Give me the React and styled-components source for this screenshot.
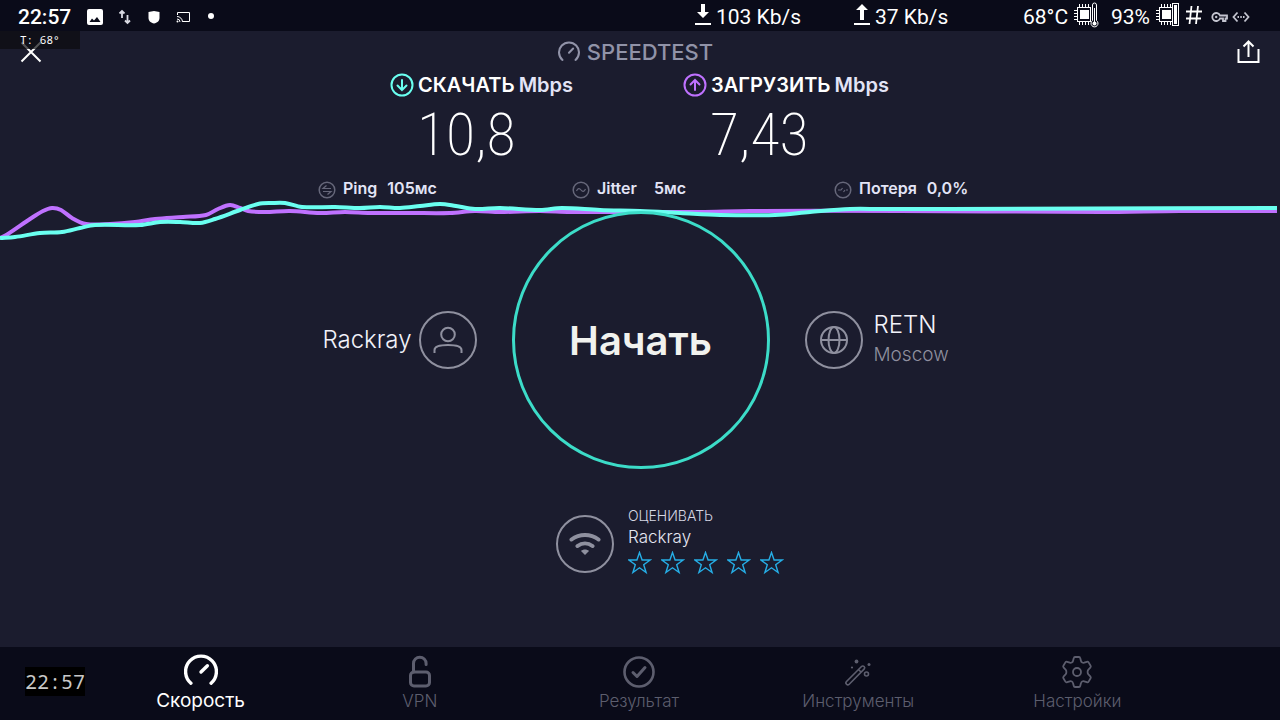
import React from "react";
import styled, { createGlobalStyle } from "styled-components";

const Global = createGlobalStyle`
  * { box-sizing: border-box; }
  body { margin: 0; background: #1b1c2e; }
  button { font: inherit; color: inherit; background: none; border: 0; padding: 0; cursor: pointer; }
  svg { display: block; flex: none; }
`;

const Page = styled.div`
  min-height: 100vh;
  display: flex;
  flex-direction: column;
  background: #1b1c2e;
  color: #fff;
  font-family: Inter, "Noto Sans", sans-serif;
`;

/* system status bar */
const StatusBar = styled.div`
  display: flex;
  align-items: center;
  justify-content: space-between;
  height: 31px;
  padding: 2px 30px 0 18px;
  background: #0a0b19;
  font-family: Roboto, sans-serif;
  font-size: 21px;
  line-height: 28px;
`;
const StatusGroup = styled.div`
  display: flex;
  align-items: center;
  gap: ${(p) => p.$gap || 0}px;
`;
const Clock = styled.time`
  font-weight: 500;
  width: 54px;
`;
const Stat = styled.div`
  display: flex;
  align-items: center;
  gap: ${(p) => p.$gap || 2}px;
  width: ${(p) => p.$w}px;
  white-space: nowrap;
`;
const Raised = styled.span`
  display: flex;
  padding-bottom: 4px;
`;

const Main = styled.main`
  flex: 1;
  display: flex;
  flex-direction: column;
`;
const Header = styled.header`
  position: relative;
  display: grid;
  grid-template-columns: 1fr auto 1fr;
  align-items: center;
  height: 42px;
  padding: 0 20px;
`;
const IconButton = styled.button`
  justify-self: ${(p) => p.$side};
  display: flex;
`;
const TempOverlay = styled.div`
  position: absolute;
  left: 0;
  top: 0;
  width: 80px;
  height: 18px;
  padding-left: 20px;
  background: rgba(12, 12, 16, 0.7);
  font: 11px/18px "Noto Sans Mono", "DejaVu Sans Mono", monospace;
  white-space: pre;
`;
const Brand = styled.h1`
  display: flex;
  align-items: center;
  gap: 7px;
  margin: 0 9px 0 0;
  color: #9193a8;
  font-size: 22px;
  font-weight: 500;
  line-height: 24px;
`;

const Speeds = styled.section`
  display: grid;
  grid-template-columns: 293px 207px;
  justify-content: center;
`;
const SpeedLabel = styled.h2`
  display: flex;
  align-items: center;
  gap: 4px;
  margin: 0;
  font-size: 20px;
  font-weight: 600;
  line-height: 24px;
  white-space: nowrap;
`;
const Unit = styled.span`
  color: #e3e4f6;
`;
const SpeedValue = styled.div`
  padding-left: 27px;
  font-family: "Noto Sans ExtraCondensed", "Roboto Condensed", "Open Sans Condensed", Roboto, sans-serif;
  font-size: 60px;
  font-weight: 200;
  line-height: 76px;
`;

const Quality = styled.section`
  display: grid;
  grid-template-columns: 254px 262px 136px;
  justify-content: center;
  padding: 4px 0 0 8px;
`;
const QualityItem = styled.div`
  display: flex;
  align-items: center;
  gap: 7px;
  color: #e3e4f6;
  font-size: 16px;
  font-weight: 600;
  line-height: 20px;
  white-space: nowrap;
`;
const QualityValue = styled.span`
  margin-left: ${(p) => (p.$wide ? 10 : 3)}px;
`;
const Sunk = styled.span`
  padding-top: 4px;
`;

const Stage = styled.section`
  position: relative;
  display: grid;
  grid-template-columns: 1fr 258px 1fr;
  align-items: center;
  gap: 35px;
  padding: 12px 0 0 1px;
`;
const Chart = styled.svg`
  position: absolute;
  left: 0;
  top: 0;
  width: 100%;
  height: 42px;
`;
const StartButton = styled.button`
  position: relative;
  height: 258px;
  && {
    border: 3px solid #3cdcc8;
    border-radius: 50%;
    color: #f1f2ee;
    font-size: 40px;
    font-weight: 600;
  }
`;
const Party = styled.div`
  display: flex;
  align-items: center;
  justify-content: ${(p) => p.$side};
  gap: ${(p) => (p.$side === "flex-end" ? 7 : 11)}px;
`;
const Ring = styled.div`
  display: flex;
  align-items: center;
  justify-content: center;
  flex: none;
  width: 58px;
  height: 58px;
  border: 2px solid #8f909f;
  border-radius: 50%;
  color: #8f909f;
`;
const PartyName = styled.div`
  color: #f2f2fa;
  font-size: 24px;
  font-weight: 300;
  line-height: 30px;
`;
const PartyPlace = styled.div`
  color: #8f909f;
  font-size: 19px;
  font-weight: 300;
  line-height: 30px;
`;

const Rate = styled.section`
  display: flex;
  align-items: center;
  justify-content: center;
  gap: 14px;
  padding: 38px 0 20px 60px;
`;
const RateBody = styled.div`
  padding-bottom: 4px;
`;
const RateTitle = styled.div`
  color: #d6d7e4;
  font-size: 14px;
  font-weight: 300;
  line-height: 18px;
`;
const RateName = styled.div`
  color: #e6e7f2;
  font-size: 17px;
  font-weight: 300;
  line-height: 24px;
`;
const Stars = styled.div`
  display: flex;
  gap: 9px;
  padding: 2px 0;
`;

const Nav = styled.nav`
  display: grid;
  grid-template-columns: 91px repeat(5, 1fr) 93px;
  align-items: center;
  height: 73px;
  background: #0a0b19;
`;
const NavClock = styled.time`
  justify-self: start;
  margin: 0 0 5px 25px;
  width: 60px;
  background: #000;
  color: #c8c8c8;
  font: 20px/29px "Noto Sans Mono", "DejaVu Sans Mono", monospace;
  text-align: center;
`;
const NavItem = styled.a`
  display: flex;
  flex-direction: column;
  align-items: center;
  gap: 1px;
  color: ${(p) => (p.$active ? "#fff" : "#5d5e6e")};
  font-size: ${(p) => (p.$active ? 19 : 17)}px;
  font-weight: ${(p) => (p.$active ? 400 : 300)};
  line-height: 24px;
  text-decoration: none;
`;

const TRACES = {
  upload: [[0,238],[8,234],[30,219],[43,211],[52,208],[61,210],[72,218],[86,224],[110,224],[135,222],[155,219],[183,217],[206,215],[218,209],[230,205],[240,208],[248,211],[265,212],[290,211],[320,213],[345,212],[370,213],[410,213],[450,213],[475,211],[500,212],[540,211],[570,212],[640,212],[700,212],[750,211],[900,211],[1100,212],[1180,211],[1277,211]],
  download: [[0,238],[15,237],[40,233],[62,232],[80,228],[95,225],[140,225],[160,222],[180,222],[200,223],[215,219],[240,210],[258,204],[272,203],[285,203],[302,207],[335,207],[360,208],[380,207],[400,208],[420,206],[440,204],[456,206],[475,209],[500,208],[540,210],[562,208],[600,210],[640,211],[680,213],[720,215],[775,215],[810,212],[850,209],[880,209],[950,209],[1277,208]],
};

/* smooth curve through the samples; monotone in x */
function curve(points) {
  const p = points.map(([x, y]) => [x, y - 199]);
  let d = `M${p[0][0]} ${p[0][1]}`;
  for (let i = 0; i < p.length - 1; i++) {
    const a = p[i], b = p[i + 1];
    const before = p[i - 1] || a, after = p[i + 2] || b;
    const w = (b[0] - a[0]) / 3;
    const sa = (b[1] - before[1]) / (b[0] - before[0]);
    const sb = (after[1] - a[1]) / (after[0] - a[0]);
    d += `C${a[0] + w} ${a[1] + sa * w} ${b[0] - w} ${b[1] - sb * w} ${b[0]} ${b[1]}`;
  }
  return d;
}

const Svg = ({ w, h = w, vb, sw = 2, children, ...rest }) => (
  <svg width={w} height={h} viewBox={vb || `0 0 ${w} ${h}`} fill="none" stroke="currentColor" strokeWidth={sw} aria-hidden="true" {...rest}>
    {children}
  </svg>
);

const Chip = ({ children }) => (
  <Svg w={26} h={26} sw={1} shapeRendering="crispEdges">
    <path d="M5.500 2v3M8.500 2v3M11.500 2v3M14.500 2v3M5.500 20v3M8.500 20v3M11.500 20v3M14.500 20v3M0 8.500h3M0 11.500h3M0 14.500h3M0 17.500h3" />
    <path d="M3.500 5.500h13v14h-13z" />
    <path d="M6 8h9v9H6z" fill="currentColor" stroke="none" />
    {children}
  </Svg>
);

const Arrow = ({ up }) => (
  <Svg w={18} h={24} sw={0}>
    <path d={up ? "M9 1l6 6h-4v10H7V7H3z" : "M7 1h4v8h4l-6 6-6-6h4z"} fill="currentColor" />
    <path d="M1 20h16v2H1z" fill="currentColor" />
  </Svg>
);

const SpeedMark = ({ color, up }) => (
  <Svg w={24} sw={2} stroke={color}>
    <circle cx="12" cy="12" r="10.500" />
    <path d={up ? "M12 17V7M7.500 11.500L12 7l4.500 4.500" : "M12 7v10M7.500 12.500L12 17l4.500-4.500"} strokeLinecap="round" />
  </Svg>
);

const Gauge = ({ size, sw }) => (
  <Svg w={size} vb="0 0 32 32" sw={sw} strokeLinecap="round">
    <path d="M6.500 27.500A14.500 14.500 0 1 1 25.500 27.500" />
    <path d="M16 17l6-6" />
  </Svg>
);

const QualityMark = ({ d }) => (
  <Svg w={18} sw={1.5} color="#66677a">
    <circle cx="9" cy="9" r="7.800" />
    <path d={d} strokeWidth="1.200" />
  </Svg>
);

const NAV = [
  ["Скорость", <Gauge size={34} sw={3.2} />],
  ["VPN", <Svg w={34} sw={3}>
    <rect x="7.500" y="18" width="19" height="14" rx="3.500" />
    <path d="M10.500 18V9.500a6.300 6.300 0 0 1 12.600 0v1" strokeLinecap="round" />
  </Svg>],
  ["Результат", <Svg w={34} sw={2.6}>
    <circle cx="17" cy="18" r="14.500" />
    <path d="M11 18.500l4 4 8-9" strokeWidth="3" strokeLinecap="round" strokeLinejoin="round" />
  </Svg>],
  ["Инструменты", <Svg w={34} sw={1.6}>
    <path d="M5.500 27.500L20.500 12.500a1.800 1.800 0 0 1 2.600 2.600L8.200 30.200a1.900 1.900 0 0 1-2.700-2.700zM17.500 15.500l2.700 2.700" />
    <circle cx="25.500" cy="20" r="2" />
    <circle cx="15.500" cy="7.500" r="1.900" fill="currentColor" stroke="none" />
    <circle cx="28" cy="10.500" r="1.500" fill="currentColor" stroke="none" />
    <circle cx="11" cy="13.500" r="1.100" fill="currentColor" stroke="none" />
  </Svg>],
  ["Настройки", <Svg w={34} sw={1.8} strokeLinejoin="round">
    <path d="M15 3h4q1 0 1.200 1l.8 3q.2 1 1.200 1.500t2 .2l2.600-.9q1.200-.4 1.800.6l2 3.400q.6 1-.3 1.900l-1.900 1.900q-.8.900-.8 2.400t.8 2.400l1.900 1.900q.9.900.3 1.900l-2 3.400q-.6 1-1.800.6l-2.600-.9q-1-.3-2 .2t-1.200 1.500l-.8 3Q20 33 19 33h-4q-1 0-1.200-1l-.8-3q-.2-1-1.200-1.500t-2-.2l-2.600.9q-1.200.4-1.800-.6l-2-3.400q-.6-1 .3-1.900l1.900-1.900q.8-.9.800-2.400t-.8-2.400l-1.900-1.900q-.9-.9-.3-1.900l2-3.400q.6-1 1.800-.6l2.600.9q1 .3 2-.2T13 7l.8-3Q14 3 15 3z" />
    <circle cx="17" cy="18" r="4" />
  </Svg>],
];

export default function App() {
  return (
    <Page>
      <Global />
      <StatusBar>
        <StatusGroup $gap={15}>
          <Clock>22:57</Clock>
          <Svg w={16} sw={0}>
            <path fillRule="evenodd" fill="currentColor" d="M2 0h12a2 2 0 0 1 2 2v12a2 2 0 0 1-2 2H2a2 2 0 0 1-2-2V2a2 2 0 0 1 2-2zM2.500 13h11L10 8l-3 3.500L5 9.500z" />
          </Svg>
          <Svg w={14} h={16} sw={1.8} color="#d8d9e2">
            <path d="M4 9V2M1.500 4.500L4 2l2.500 2.500M9.500 6v8M7 11.500L9.500 14l2.500-2.500" />
          </Svg>
          <Svg w={14} h={14} sw={0}>
            <path d="M1.500 2L7 1l5.500 1v6c0 3-2.500 5-5.500 5.500C4 13 1.500 11 1.500 8z" fill="currentColor" />
          </Svg>
          <Svg w={15} h={12} sw={1}>
            <path d="M1.500 4V1.500h12v9H7M1 5.500A5.500 5.500 0 0 1 6.500 11M1 8a3 3 0 0 1 3 3" />
            <circle cx="1.500" cy="10.500" r="1" fill="currentColor" stroke="none" />
          </Svg>
          <Svg w={12} sw={0}><circle cx="5" cy="5" r="3" fill="currentColor" /></Svg>
        </StatusGroup>
        <StatusGroup>
          <Stat $w={159} $gap={4}><Raised><Arrow /></Raised>103 Kb/s</Stat>
          <Stat $w={170} $gap={4}><Raised><Arrow up /></Raised>37 Kb/s</Stat>
          <Stat $w={88} $gap={6}>
            68°C
            <Raised>
              <Chip>
                <g shapeRendering="auto">
                  <path d="M18.500 3a2 2 0 0 1 4 0v15.500a3.500 3.500 0 1 1-4 0z" fill="#0a0b19" />
                  <path d="M20 6h1v14h-1z" fill="currentColor" stroke="none" />
                  <circle cx="20.500" cy="21.500" r="2" fill="currentColor" stroke="none" />
                </g>
              </Chip>
            </Raised>
          </Stat>
          <Stat $w={74} $gap={6}>
            93%
            <Raised>
              <Chip>
                <path d="M16.500 1.500h6v22h-6z" fill="#0a0b19" />
                <path d="M18 3h3v19h-3z" fill="currentColor" stroke="none" />
              </Chip>
            </Raised>
          </Stat>
          <Stat $w={26}>
            <Raised><Svg w={18} h={20} sw={1.8}><path d="M6.500 1l-2 18M13 1l-2 18M1 6.500h16M1 13.500h15" /></Svg></Raised>
          </Stat>
          <StatusGroup $gap={4}>
            <Svg w={17} h={12} sw={1.8} color="#c3c4cf">
              <path d="M9 4.500h7v3h-1.500V10H12V7.500H9a4 4 0 1 1 0-3z" />
              <circle cx="5.200" cy="6" r="1.200" fill="currentColor" stroke="none" />
            </Svg>
            <Svg w={18} h={12} sw={1.8} color="#c3c4cf">
              <path d="M5.500 1.500L1.500 6l4 4.500M12.500 1.500l4 4.500-4 4.500M5.500 6h1.500M8.300 6h1.500M11 6h1.500" />
            </Svg>
          </StatusGroup>
        </StatusGroup>
      </StatusBar>

      <Main>
        <Header>
          <IconButton $side="start" aria-label="Закрыть">
            <Svg w={22} sw={2}><path d="M1.500 1.500l19 19M20.500 1.500l-19 19" /></Svg>
          </IconButton>
          <Brand><Gauge size={22} sw={3} />SPEEDTEST</Brand>
          <IconButton $side="end" aria-label="Поделиться">
            <Svg w={24} h={24}><path d="M2.500 9v13h20V9M12.500 17V2M7.500 6.500l5-5 5 5" /></Svg>
          </IconButton>
          <TempOverlay>T: 68°</TempOverlay>
        </Header>

        <Speeds>
          <div>
            <SpeedLabel><SpeedMark color="#6afff0" />СКАЧАТЬ <Unit>Mbps</Unit></SpeedLabel>
            <SpeedValue>10,8</SpeedValue>
          </div>
          <div>
            <SpeedLabel><SpeedMark color="#bf71ff" up />ЗАГРУЗИТЬ <Unit>Mbps</Unit></SpeedLabel>
            <SpeedValue>7,43</SpeedValue>
          </div>
        </Speeds>

        <Quality>
          <QualityItem>
            <Sunk><QualityMark d="M13 7.500H5l3.500-3M5 10.500h8l-3.500 3" /></Sunk>Ping <QualityValue>105мс</QualityValue>
          </QualityItem>
          <QualityItem>
            <Sunk><QualityMark d="M4.500 10c1.500-3 3-3 4.500-1s3 2 4.500-1" /></Sunk>Jitter <QualityValue $wide>5мс</QualityValue>
          </QualityItem>
          <QualityItem>
            <Sunk><QualityMark d="M4 9h3l1.500-2M9.500 11L11 9M12 9h2" /></Sunk>Потеря <QualityValue>0,0%</QualityValue>
          </QualityItem>
        </Quality>

        <Stage>
          <Chart viewBox="0 0 1280 42" preserveAspectRatio="none" fill="none" strokeWidth="4" aria-hidden="true">
            <path d={curve(TRACES.upload)} stroke="#bf71ff" />
            <path d={curve(TRACES.download)} stroke="#6afff0" />
          </Chart>
          <Party $side="flex-end">
            <PartyName>Rackray</PartyName>
            <Ring>
              <Svg w={32} sw={2}>
                <circle cx="16" cy="10.500" r="6.800" />
                <path d="M2.500 29v-3c0-3 5-5 13.500-5s13.500 2 13.500 5v3" />
              </Svg>
            </Ring>
          </Party>
          <StartButton>Начать</StartButton>
          <Party $side="flex-start">
            <Ring>
              <Svg w={30} sw={2}>
                <circle cx="15" cy="15" r="13" />
                <ellipse cx="15" cy="15" rx="5.500" ry="13" />
                <path d="M2 15h26" />
              </Svg>
            </Ring>
            <div>
              <PartyName>RETN</PartyName>
              <PartyPlace>Moscow</PartyPlace>
            </div>
          </Party>
        </Stage>

        <Rate>
          <Ring>
            <Svg w={32} h={26} sw={4}>
              <path d="M2.500 8.500c8-6 19-6 27 0M8.500 15c4.500-3.500 10.500-3.500 15 0" strokeLinecap="round" />
              <path d="M16 24l-4-4c2-2 6-2 8 0z" fill="currentColor" stroke="none" />
            </Svg>
          </Ring>
          <RateBody>
            <RateTitle>ОЦЕНИВАТЬ</RateTitle>
            <RateName>Rackray</RateName>
            <Stars>
              {[1, 2, 3, 4, 5].map((n) => (
                <button key={n} aria-label={`Оценка ${n}`}>
                  <Svg w={24} sw={1.4} color="#26aee6">
                    <path d="M11.500 1.500l2.600 7.500h8l-6.400 4.800 2.400 7.700-6.600-4.700-6.600 4.700 2.400-7.700L.9 9h8z" />
                  </Svg>
                </button>
              ))}
            </Stars>
          </RateBody>
        </Rate>
      </Main>

      <Nav>
        <NavClock>22:57</NavClock>
        {NAV.map(([label, icon], i) => (
          <NavItem key={label} href="#" $active={i === 0}>{icon}{label}</NavItem>
        ))}
      </Nav>
    </Page>
  );
}
